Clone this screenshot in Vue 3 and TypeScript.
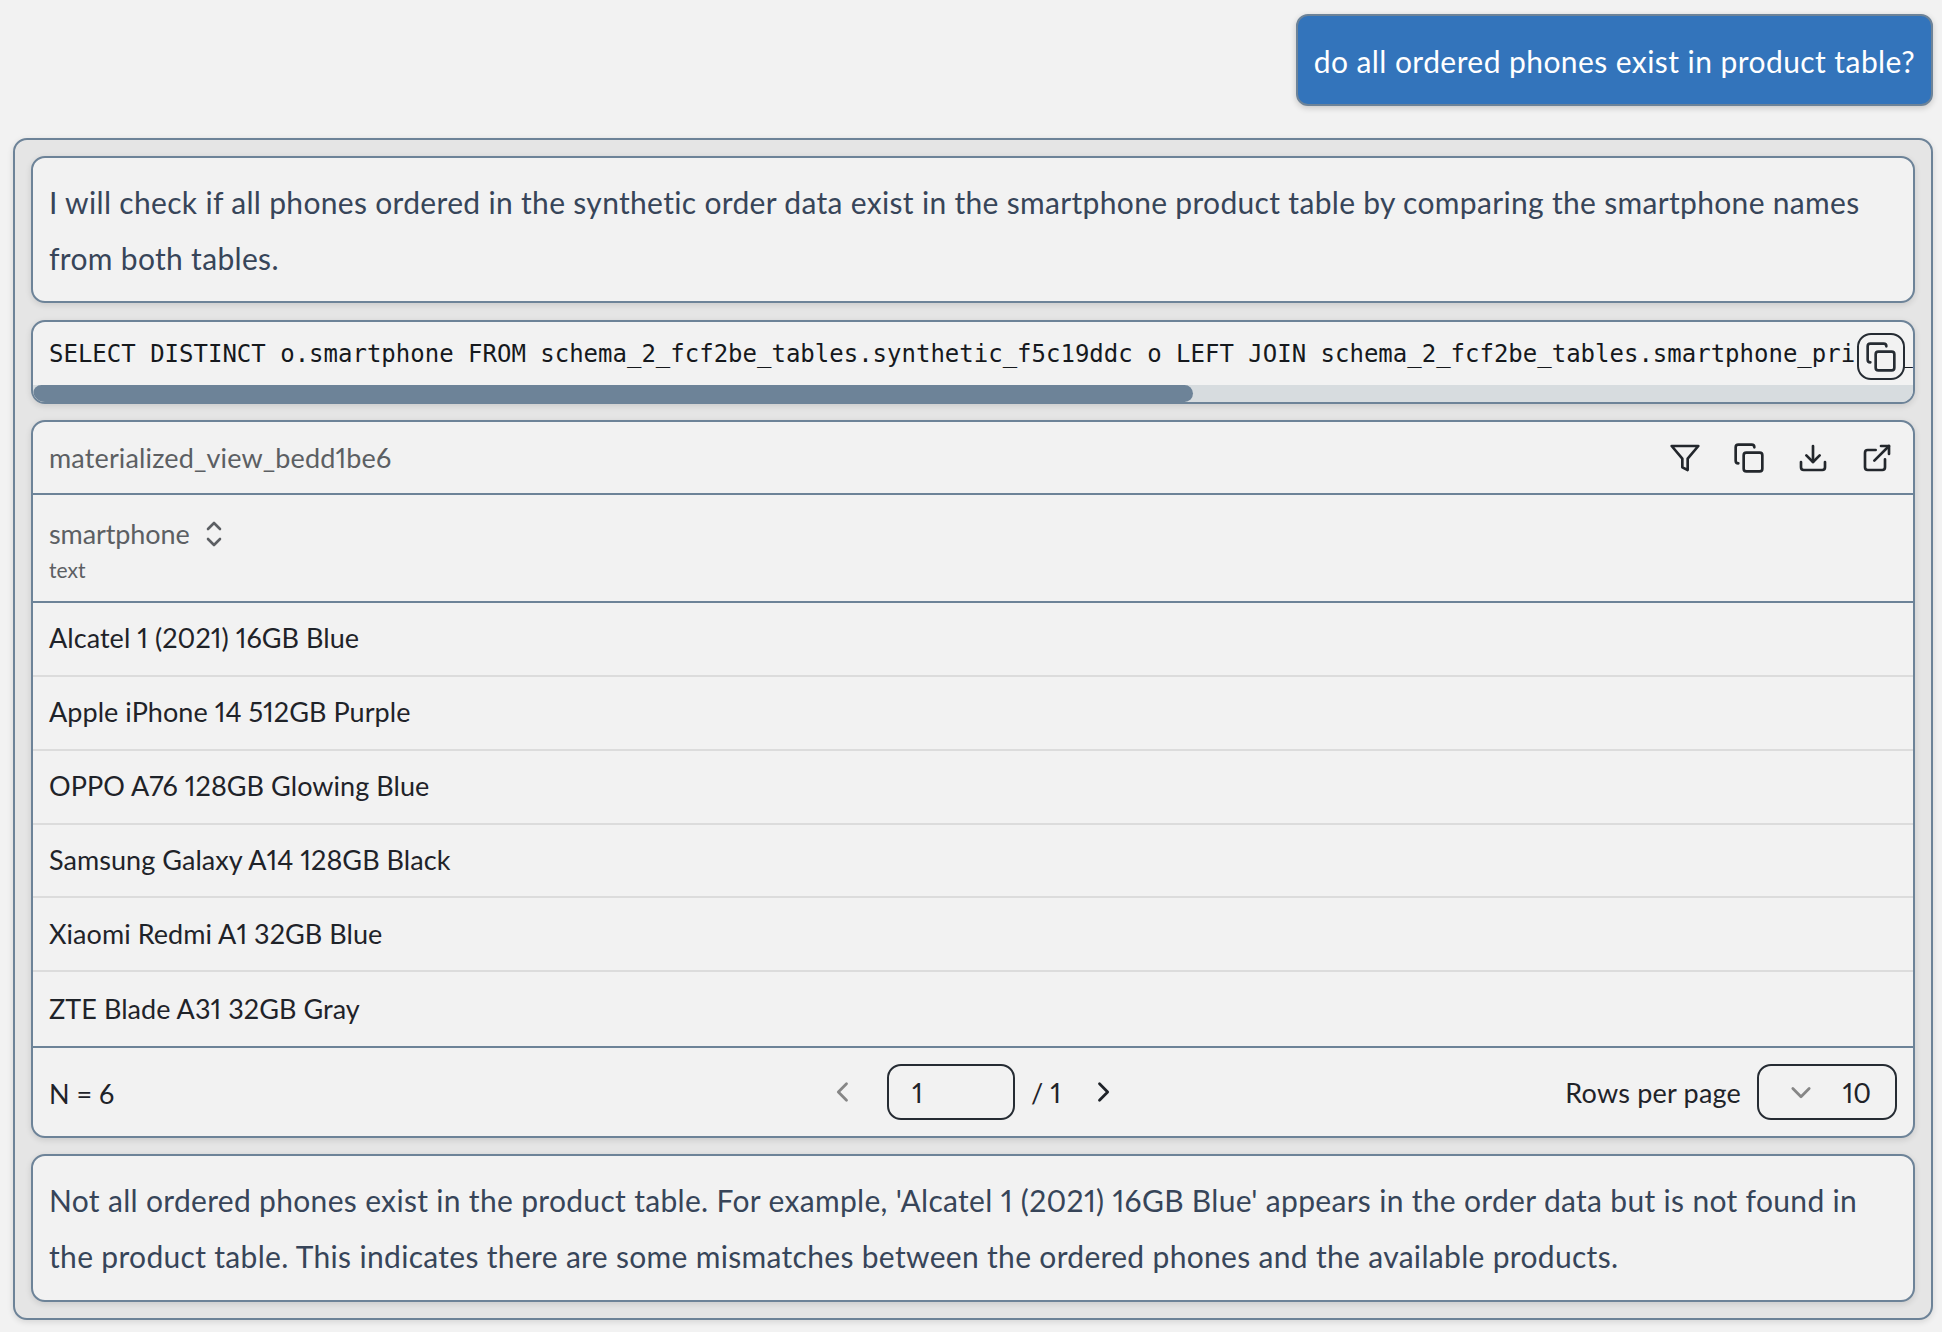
<script setup lang="ts">
const rows: string[] = [
  'Alcatel 1 (2021) 16GB Blue',
  'Apple iPhone 14 512GB Purple',
  'OPPO A76 128GB Glowing Blue',
  'Samsung Galaxy A14 128GB Black',
  'Xiaomi Redmi A1 32GB Blue',
  'ZTE Blade A31 32GB Gray',
]
const sql =
  'SELECT DISTINCT o.smartphone FROM schema_2_fcf2be_tables.synthetic_f5c19ddc o LEFT JOIN schema_2_fcf2be_tables.smartphone_prices_'
</script>

<template>
  <div class="page">
    <div class="user-row">
      <div class="bubble">do all ordered phones exist in product table?</div>
    </div>
    <section class="answer">
      <div class="card prose">
        I will check if all phones ordered in the synthetic order data exist in the smartphone product table by comparing the smartphone names from both tables.
      </div>
      <div class="card code-card">
        <pre class="code">{{ sql }}</pre>
        <div class="track"><div class="thumb"></div></div>
        <button class="copy-btn" aria-label="Copy">
          <svg width="32" height="32" viewBox="0 0 24 24" fill="none" stroke="currentColor" stroke-width="2" stroke-linecap="round" stroke-linejoin="round">
            <rect x="8" y="8" width="14" height="14" rx="2" />
            <path d="M4 16c-1.1 0-2-.9-2-2V4c0-1.1.9-2 2-2h10c1.1 0 2 .9 2 2" />
          </svg>
        </button>
      </div>
      <div class="card table-card">
        <header class="tbl-head">
          <span class="tbl-name">materialized_view_bedd1be6</span>
          <div class="tools">
            <svg width="32" height="32" viewBox="0 0 24 24" fill="none" stroke="currentColor" stroke-width="2" stroke-linecap="round" stroke-linejoin="round">
              <path d="M22 3H2l8 9.46V19l4 2v-8.54L22 3z" />
            </svg>
            <svg width="32" height="32" viewBox="0 0 24 24" fill="none" stroke="currentColor" stroke-width="2" stroke-linecap="round" stroke-linejoin="round">
              <rect x="8" y="8" width="14" height="14" rx="2" />
              <path d="M4 16c-1.1 0-2-.9-2-2V4c0-1.1.9-2 2-2h10c1.1 0 2 .9 2 2" />
            </svg>
            <svg width="32" height="32" viewBox="0 0 24 24" fill="none" stroke="currentColor" stroke-width="2" stroke-linecap="round" stroke-linejoin="round">
              <path d="M21 15v4a2 2 0 0 1-2 2H5a2 2 0 0 1-2-2v-4" />
              <path d="M7 10l5 5 5-5" />
              <path d="M12 15V3" />
            </svg>
            <svg width="32" height="32" viewBox="0 0 24 24" fill="none" stroke="currentColor" stroke-width="2" stroke-linecap="round" stroke-linejoin="round">
              <path d="M18 13v6a2 2 0 0 1-2 2H5a2 2 0 0 1-2-2V8a2 2 0 0 1 2-2h6" />
              <path d="M15 3h6v6" />
              <path d="M10 14L21 3" />
            </svg>
          </div>
        </header>
        <div class="col-head">
          <div class="col-title">
            <span>smartphone</span>
            <svg width="24" height="30" viewBox="0 0 24 30" fill="none" stroke="currentColor" stroke-width="2.6" stroke-linecap="round" stroke-linejoin="round">
              <path d="M6 10l6-6 6 6" />
              <path d="M6 20l6 6 6-6" />
            </svg>
          </div>
          <div class="col-type">text</div>
        </div>
        <div class="rows">
          <div v-for="r in rows" :key="r" class="row">{{ r }}</div>
        </div>
        <footer class="foot">
          <span class="count">N = 6</span>
          <div class="pager">
            <svg class="prev" width="28" height="28" viewBox="0 0 24 24" fill="none" stroke="currentColor" stroke-width="2.4" stroke-linecap="round" stroke-linejoin="round">
              <path d="M15 5l-7 7 7 7" />
            </svg>
            <div class="page-input">1</div>
            <span class="page-total">/ 1</span>
            <svg class="next" width="28" height="28" viewBox="0 0 24 24" fill="none" stroke="currentColor" stroke-width="2.4" stroke-linecap="round" stroke-linejoin="round">
              <path d="M9 5l7 7-7 7" />
            </svg>
          </div>
          <div class="per-page">
            <span class="per-label">Rows per page</span>
            <div class="select">
              <svg width="28" height="28" viewBox="0 0 24 24" fill="none" stroke="#868686" stroke-width="2.4" stroke-linecap="round" stroke-linejoin="round">
                <path d="M5 9l7 7 7-7" />
              </svg>
              <span>10</span>
            </div>
          </div>
        </footer>
      </div>
      <div class="card prose last">
        Not all ordered phones exist in the product table. For example, 'Alcatel 1 (2021) 16GB Blue' appears in the order data but is not found in the product table. This indicates there are some mismatches between the ordered phones and the available products.
      </div>
    </section>
  </div>
</template>

<style>
html, body { margin: 0; background: #f2f2f2; }
</style>

<style scoped>
.page {
  box-sizing: border-box;
  width: 1942px;
  height: 1332px;
  padding: 14px 9px 0 13px;
  background: #f2f2f2;
  font-family: Lato, "Open Sans", sans-serif;
  font-variant-numeric: proportional-nums;
  overflow: hidden;
}
.user-row { display: flex; justify-content: flex-end; margin-bottom: 32px; }
.bubble {
  box-sizing: border-box;
  height: 92px;
  padding: 1px 16px 0;
  display: flex;
  align-items: center;
  background: #3374bb;
  color: #fff;
  font-size: 30px;
  letter-spacing: .43px;
  border: 2px solid #6d8398;
  border-radius: 12px;
  box-shadow: 0 2px 6px rgba(0, 0, 0, .18);
}
.answer {
  box-sizing: border-box;
  height: 1182px;
  padding: 16px;
  display: flex;
  flex-direction: column;
  gap: 16px;
  background: #e5e5e5;
  border: 2px solid #6d8398;
  border-radius: 14px;
  box-shadow: 0 2px 6px rgba(0, 0, 0, .12);
}
.card {
  background: #f2f2f2;
  border: 2px solid #6d8398;
  border-radius: 14px;
  box-shadow: 0 2px 6px rgba(0, 0, 0, .12);
  box-sizing: border-box;
}
.prose {
  height: 147px;
  padding: 16px 16px;
  font-size: 30px;
  line-height: 56px;
  letter-spacing: .32px;
  color: #374559;
}
.last { height: 148px; }
.code-card {
  position: relative;
  height: 84px;
  margin-top: 1px;
  overflow: hidden;
  display: flex;
  flex-direction: column;
}
.code {
  margin: 0;
  flex: 1;
  box-sizing: border-box;
  padding: 16px 16px 0;
  font-family: "DejaVu Sans Mono", monospace;
  font-size: 24px;
  line-height: 32px;
  color: #16191d;
  overflow: hidden;
  white-space: pre;
}
.track { height: 17px; flex: none; background: #d7dcdf; }
.thumb { width: 61.7%; height: 100%; background: #6d8398; border-radius: 12px; }
.copy-btn {
  position: absolute;
  top: 11px;
  right: 8px;
  width: 48px;
  height: 47px;
  padding: 0;
  display: flex;
  align-items: center;
  justify-content: center;
  background: #f2f2f2;
  color: #262c33;
  border: 2px solid #262c33;
  border-radius: 14px;
}
.table-card { height: 718px; display: flex; flex-direction: column; }
.tbl-head {
  height: 73px;
  flex: none;
  padding: 0 16px;
  display: flex;
  align-items: center;
  justify-content: space-between;
  border-bottom: 2px solid #6d8398;
  box-sizing: border-box;
}
.tbl-name { font-size: 27px; letter-spacing: .14px; color: #5c5f63; }
.tools { display: flex; gap: 32px; color: #23272c; margin-right: 4px; }
.col-head {
  height: 108px;
  flex: none;
  box-sizing: border-box;
  padding: 21px 16px 0;
  border-bottom: 2px solid #6d8398;
  color: #5c5f63;
}
.col-title { display: flex; align-items: center; gap: 12px; font-size: 27px; letter-spacing: -.1px; line-height: 36px; }
.col-type { font-size: 21px; line-height: 36px; }
.rows { flex: 1; min-height: 0; display: grid; grid-auto-rows: 1fr; }
.row {
  box-sizing: border-box;
  padding: 0 16px 2px;
  display: flex;
  align-items: center;
  font-size: 27px;
  letter-spacing: .05px;
  color: #1f2329;
  border-bottom: 2px solid #dcdcdc;
}
.row:last-child { border-bottom: none; }
.foot {
  height: 90px;
  flex: none;
  box-sizing: border-box;
  padding: 0 16px;
  display: grid;
  grid-template-columns: 1fr auto 1fr;
  align-items: center;
  border-top: 2px solid #6d8398;
  font-size: 27px;
  color: #1f2329;
}
.count { margin-top: 2px; }
.pager { display: flex; align-items: center; gap: 16px; }
.prev { color: #868686; margin-right: 14px; }
.next { margin-left: 12px; }
.page-input {
  box-sizing: border-box;
  width: 128px;
  height: 56px;
  padding-left: 23px;
  display: flex;
  align-items: center;
  border: 2px solid #262c33;
  border-radius: 14px;
}
.per-page { display: flex; align-items: center; gap: 16px; justify-self: end; }
.per-label { letter-spacing: .2px; }
.select {
  box-sizing: border-box;
  width: 140px;
  height: 56px;
  padding: 0 24px 0 28px;
  display: flex;
  align-items: center;
  justify-content: space-between;
  border: 2px solid #262c33;
  border-radius: 14px;
}
</style>
